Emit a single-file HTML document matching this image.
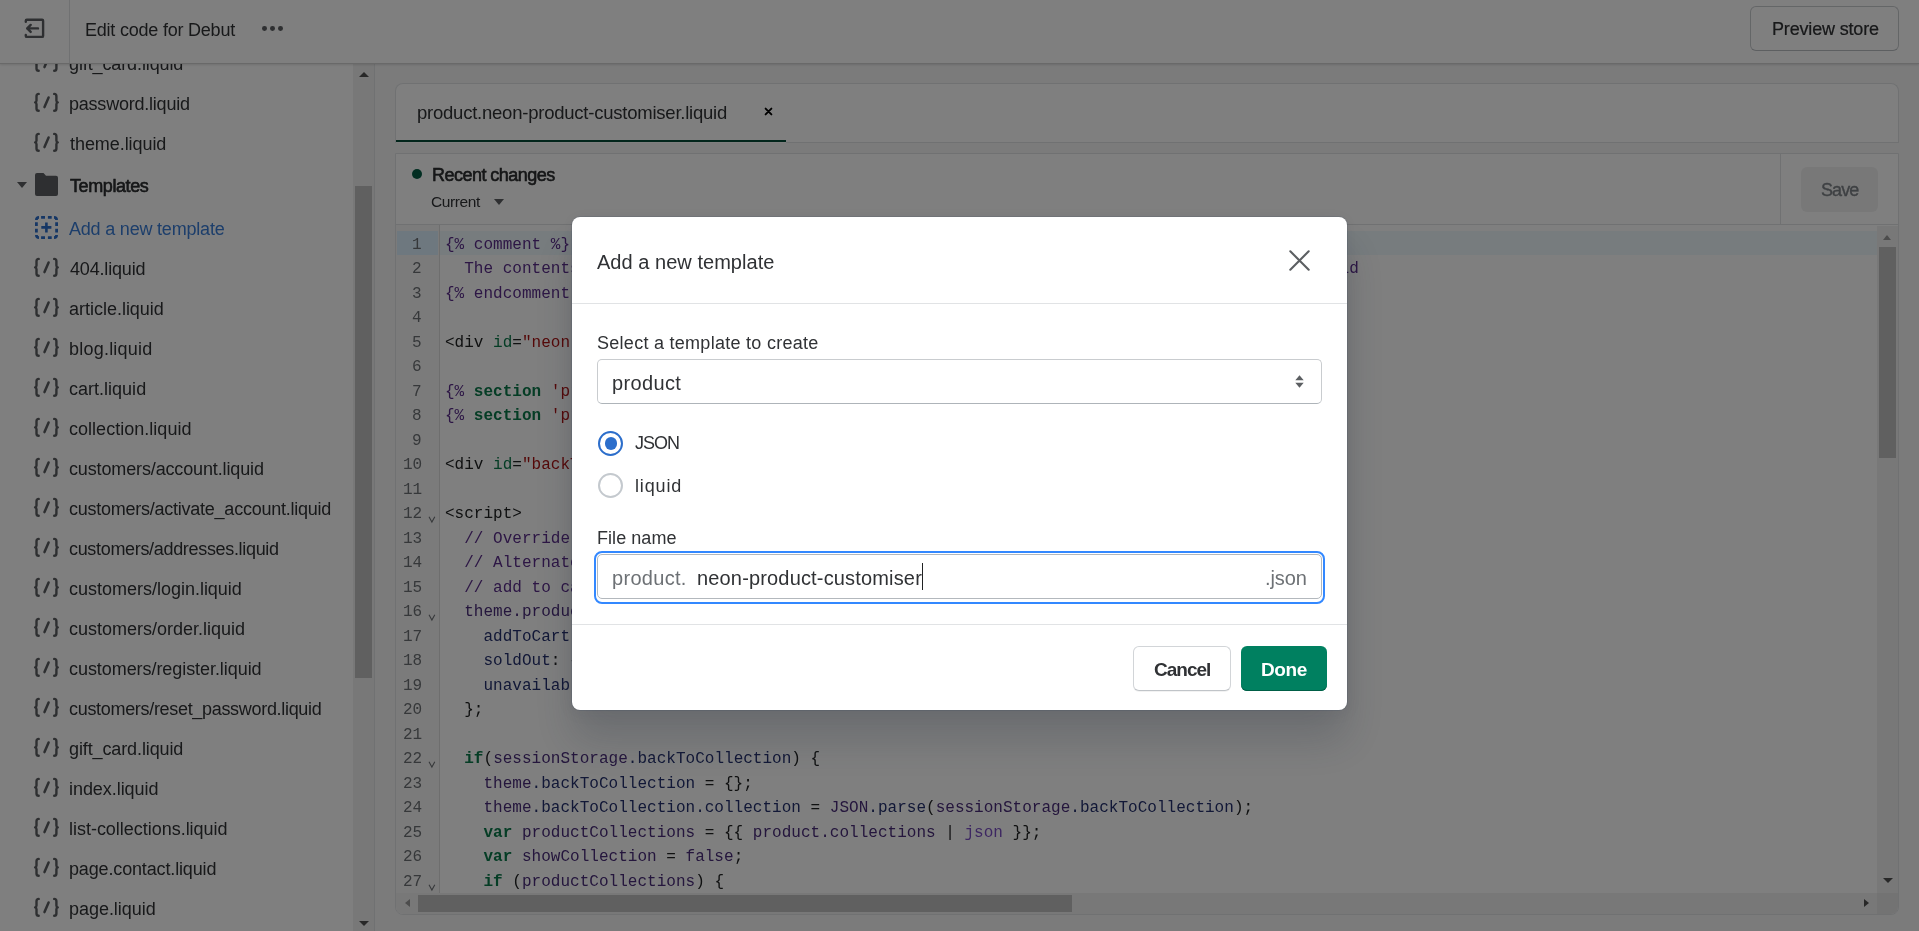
<!DOCTYPE html>
<html><head><meta charset="utf-8"><style>
html,body{margin:0;padding:0;}
body{width:1919px;height:931px;overflow:hidden;position:relative;background:#fff;font-family:'Liberation Sans', sans-serif;}
.box{position:absolute;box-sizing:border-box;}
.t{position:absolute;white-space:pre;will-change:transform;}
svg.box{box-sizing:content-box;overflow:visible;}
</style></head><body>
<div class="box" style="left:0;top:0;width:1919px;height:64px;background:#fff;border-bottom:1px solid #d2d2d2;box-shadow:0 1px 2px rgba(0,0,0,0.12);z-index:5"></div><div class="box" style="left:69px;top:0;width:1px;height:63px;background:#e1e3e5;z-index:6"></div><svg class="box" style="left:24px;top:17px;z-index:6" width="22" height="23" viewBox="0 0 22 23">
<path d="M1.8 4.7 V3.8 Q1.8 2.8 2.8 2.8 H18.1 Q19.1 2.8 19.1 3.8 V18.9 Q19.1 19.9 18.1 19.9 H2.8 Q1.8 19.9 1.8 18.9 V17.9" fill="none" stroke="#5c5f62" stroke-width="2.4" stroke-linecap="round" stroke-linejoin="round"/>
<path d="M14 11.4 H3.2 M6.7 7.9 L3.2 11.4 L6.7 14.9" fill="none" stroke="#5c5f62" stroke-width="2.4" stroke-linecap="round" stroke-linejoin="round"/>
</svg><div style="position:absolute;left:0;top:0;z-index:7"><div class="t" style="left:84.60px;top:19px;font-family:'Liberation Sans', sans-serif;font-size:18px;line-height:23px;color:#303235;font-weight:400;letter-spacing:-0.217px;">Edit code for Debut</div></div><div class="box" style="left:262.40000000000003px;top:26px;width:4.8px;height:4.8px;border-radius:50%;background:#5c5f62;z-index:6"></div><div class="box" style="left:270.1px;top:26px;width:4.8px;height:4.8px;border-radius:50%;background:#5c5f62;z-index:6"></div><div class="box" style="left:277.8px;top:26px;width:4.8px;height:4.8px;border-radius:50%;background:#5c5f62;z-index:6"></div><div class="box" style="left:1750px;top:6px;width:149px;height:45px;border:1px solid #c9cccf;border-bottom-color:#babfc3;border-radius:6px;background:#fff;z-index:6"></div><div style="position:absolute;left:0;top:0;z-index:7"><div class="t" style="left:1771.50px;top:18px;font-family:'Liberation Sans', sans-serif;font-size:18px;line-height:23px;color:#303235;font-weight:400;letter-spacing:-0.167px;-webkit-text-stroke:0.2px #202223;">Preview store</div></div><div class="box" style="left:0;top:63px;width:375px;height:868px;background:#fff;border-right:1px solid #e1e3e5"></div><div class="box" style="left:353px;top:63px;width:21px;height:868px;background:#f1f1f1"></div><div class="box" style="left:355px;top:186px;width:17px;height:492px;background:#c1c1c1"></div><div class="box" style="left:359px;top:72px;width:0;height:0;border-left:5px solid transparent;border-right:5px solid transparent;border-bottom:5px solid #505050"></div><div class="box" style="left:358.5px;top:921px;width:0;height:0;border-left:5px solid transparent;border-right:5px solid transparent;border-top:5px solid #505050"></div><svg class="box" style="left:33px;top:51px" width="27" height="23" viewBox="0 0 27 23"><path d="M5.7 2.9 Q3.5 2.9 3.5 5.2 V9.6 Q3.5 11.2 2.1 11.4 Q3.5 11.6 3.5 13.2 V17.5 Q3.5 19.8 5.7 19.8" fill="none" stroke="#5c5f62" stroke-width="2.4" stroke-linecap="round" stroke-linejoin="round"/><path d="M21.2 2.9 Q23.4 2.9 23.4 5.2 V9.6 Q23.4 11.2 24.8 11.4 Q23.4 11.6 23.4 13.2 V17.5 Q23.4 19.8 21.2 19.8" fill="none" stroke="#5c5f62" stroke-width="2.4" stroke-linecap="round" stroke-linejoin="round"/><path d="M11.5 16.1 L15.6 6.5" stroke="#5c5f62" stroke-width="2.5" stroke-linecap="round"/></svg><div class="t" style="left:68.50px;top:53px;font-family:'Liberation Sans', sans-serif;font-size:18px;line-height:23px;color:#303235;font-weight:400;letter-spacing:-0.113px;">gift_card.liquid</div><svg class="box" style="left:33px;top:91px" width="27" height="23" viewBox="0 0 27 23"><path d="M5.7 2.9 Q3.5 2.9 3.5 5.2 V9.6 Q3.5 11.2 2.1 11.4 Q3.5 11.6 3.5 13.2 V17.5 Q3.5 19.8 5.7 19.8" fill="none" stroke="#5c5f62" stroke-width="2.4" stroke-linecap="round" stroke-linejoin="round"/><path d="M21.2 2.9 Q23.4 2.9 23.4 5.2 V9.6 Q23.4 11.2 24.8 11.4 Q23.4 11.6 23.4 13.2 V17.5 Q23.4 19.8 21.2 19.8" fill="none" stroke="#5c5f62" stroke-width="2.4" stroke-linecap="round" stroke-linejoin="round"/><path d="M11.5 16.1 L15.6 6.5" stroke="#5c5f62" stroke-width="2.5" stroke-linecap="round"/></svg><div class="t" style="left:68.50px;top:93px;font-family:'Liberation Sans', sans-serif;font-size:18px;line-height:23px;color:#303235;font-weight:400;letter-spacing:-0.221px;">password.liquid</div><svg class="box" style="left:33px;top:131px" width="27" height="23" viewBox="0 0 27 23"><path d="M5.7 2.9 Q3.5 2.9 3.5 5.2 V9.6 Q3.5 11.2 2.1 11.4 Q3.5 11.6 3.5 13.2 V17.5 Q3.5 19.8 5.7 19.8" fill="none" stroke="#5c5f62" stroke-width="2.4" stroke-linecap="round" stroke-linejoin="round"/><path d="M21.2 2.9 Q23.4 2.9 23.4 5.2 V9.6 Q23.4 11.2 24.8 11.4 Q23.4 11.6 23.4 13.2 V17.5 Q23.4 19.8 21.2 19.8" fill="none" stroke="#5c5f62" stroke-width="2.4" stroke-linecap="round" stroke-linejoin="round"/><path d="M11.5 16.1 L15.6 6.5" stroke="#5c5f62" stroke-width="2.5" stroke-linecap="round"/></svg><div class="t" style="left:69.50px;top:133px;font-family:'Liberation Sans', sans-serif;font-size:18px;line-height:23px;color:#303235;font-weight:400;letter-spacing:-0.064px;">theme.liquid</div><div class="box" style="left:16.5px;top:182px;width:0;height:0;border-left:5px solid transparent;border-right:5px solid transparent;border-top:6.5px solid #5c5f62"></div><svg class="box" style="left:35px;top:173px" width="23" height="23" viewBox="0 0 23 23"><path d="M0 2 Q0 0 2 0 H8.5 L11 2.8 H21 Q23 2.8 23 4.8 V21 Q23 23 21 23 H2 Q0 23 0 21 Z" fill="#5c5f62"/></svg><div class="t" style="left:69.75px;top:175px;font-family:'Liberation Sans', sans-serif;font-size:18px;line-height:23px;color:#303235;font-weight:400;letter-spacing:-0.406px;-webkit-text-stroke:0.55px #202223;">Templates</div><svg class="box" style="left:35px;top:216px" width="23" height="23" viewBox="0 0 23 23">
<path d="M1.4 4 Q1.4 1.4 4 1.4 M6.1 1.4 H10 M12.9 1.4 H16.7 M19 1.4 Q21.6 1.4 21.6 4 M21.6 6.2 V10 M21.6 12.8 V16.6 M21.6 19 Q21.6 21.6 19 21.6 M16.7 21.6 H12.9 M10 21.6 H6.1 M4 21.6 Q1.4 21.6 1.4 19 M1.4 16.6 V12.8 M1.4 10 V6.2" fill="none" stroke="#2c6ecb" stroke-width="2.8"/>
<path d="M6.3 11.4 H16.4 M11.4 6.4 V16.4" stroke="#2c6ecb" stroke-width="2.6"/></svg><div class="t" style="left:69.40px;top:218px;font-family:'Liberation Sans', sans-serif;font-size:18px;line-height:23px;color:#3a7dd6;font-weight:400;letter-spacing:-0.200px;">Add a new template</div><svg class="box" style="left:33px;top:256px" width="27" height="23" viewBox="0 0 27 23"><path d="M5.7 2.9 Q3.5 2.9 3.5 5.2 V9.6 Q3.5 11.2 2.1 11.4 Q3.5 11.6 3.5 13.2 V17.5 Q3.5 19.8 5.7 19.8" fill="none" stroke="#5c5f62" stroke-width="2.4" stroke-linecap="round" stroke-linejoin="round"/><path d="M21.2 2.9 Q23.4 2.9 23.4 5.2 V9.6 Q23.4 11.2 24.8 11.4 Q23.4 11.6 23.4 13.2 V17.5 Q23.4 19.8 21.2 19.8" fill="none" stroke="#5c5f62" stroke-width="2.4" stroke-linecap="round" stroke-linejoin="round"/><path d="M11.5 16.1 L15.6 6.5" stroke="#5c5f62" stroke-width="2.5" stroke-linecap="round"/></svg><div class="t" style="left:69.50px;top:258px;font-family:'Liberation Sans', sans-serif;font-size:18px;line-height:23px;color:#303235;font-weight:400;letter-spacing:-0.167px;">404.liquid</div><svg class="box" style="left:33px;top:296px" width="27" height="23" viewBox="0 0 27 23"><path d="M5.7 2.9 Q3.5 2.9 3.5 5.2 V9.6 Q3.5 11.2 2.1 11.4 Q3.5 11.6 3.5 13.2 V17.5 Q3.5 19.8 5.7 19.8" fill="none" stroke="#5c5f62" stroke-width="2.4" stroke-linecap="round" stroke-linejoin="round"/><path d="M21.2 2.9 Q23.4 2.9 23.4 5.2 V9.6 Q23.4 11.2 24.8 11.4 Q23.4 11.6 23.4 13.2 V17.5 Q23.4 19.8 21.2 19.8" fill="none" stroke="#5c5f62" stroke-width="2.4" stroke-linecap="round" stroke-linejoin="round"/><path d="M11.5 16.1 L15.6 6.5" stroke="#5c5f62" stroke-width="2.5" stroke-linecap="round"/></svg><div class="t" style="left:68.50px;top:298px;font-family:'Liberation Sans', sans-serif;font-size:18px;line-height:23px;color:#303235;font-weight:400;letter-spacing:-0.015px;">article.liquid</div><svg class="box" style="left:33px;top:336px" width="27" height="23" viewBox="0 0 27 23"><path d="M5.7 2.9 Q3.5 2.9 3.5 5.2 V9.6 Q3.5 11.2 2.1 11.4 Q3.5 11.6 3.5 13.2 V17.5 Q3.5 19.8 5.7 19.8" fill="none" stroke="#5c5f62" stroke-width="2.4" stroke-linecap="round" stroke-linejoin="round"/><path d="M21.2 2.9 Q23.4 2.9 23.4 5.2 V9.6 Q23.4 11.2 24.8 11.4 Q23.4 11.6 23.4 13.2 V17.5 Q23.4 19.8 21.2 19.8" fill="none" stroke="#5c5f62" stroke-width="2.4" stroke-linecap="round" stroke-linejoin="round"/><path d="M11.5 16.1 L15.6 6.5" stroke="#5c5f62" stroke-width="2.5" stroke-linecap="round"/></svg><div class="t" style="left:68.50px;top:338px;font-family:'Liberation Sans', sans-serif;font-size:18px;line-height:23px;color:#303235;font-weight:400;letter-spacing:0.220px;">blog.liquid</div><svg class="box" style="left:33px;top:376px" width="27" height="23" viewBox="0 0 27 23"><path d="M5.7 2.9 Q3.5 2.9 3.5 5.2 V9.6 Q3.5 11.2 2.1 11.4 Q3.5 11.6 3.5 13.2 V17.5 Q3.5 19.8 5.7 19.8" fill="none" stroke="#5c5f62" stroke-width="2.4" stroke-linecap="round" stroke-linejoin="round"/><path d="M21.2 2.9 Q23.4 2.9 23.4 5.2 V9.6 Q23.4 11.2 24.8 11.4 Q23.4 11.6 23.4 13.2 V17.5 Q23.4 19.8 21.2 19.8" fill="none" stroke="#5c5f62" stroke-width="2.4" stroke-linecap="round" stroke-linejoin="round"/><path d="M11.5 16.1 L15.6 6.5" stroke="#5c5f62" stroke-width="2.5" stroke-linecap="round"/></svg><div class="t" style="left:68.50px;top:378px;font-family:'Liberation Sans', sans-serif;font-size:18px;line-height:23px;color:#303235;font-weight:400;letter-spacing:0.010px;">cart.liquid</div><svg class="box" style="left:33px;top:416px" width="27" height="23" viewBox="0 0 27 23"><path d="M5.7 2.9 Q3.5 2.9 3.5 5.2 V9.6 Q3.5 11.2 2.1 11.4 Q3.5 11.6 3.5 13.2 V17.5 Q3.5 19.8 5.7 19.8" fill="none" stroke="#5c5f62" stroke-width="2.4" stroke-linecap="round" stroke-linejoin="round"/><path d="M21.2 2.9 Q23.4 2.9 23.4 5.2 V9.6 Q23.4 11.2 24.8 11.4 Q23.4 11.6 23.4 13.2 V17.5 Q23.4 19.8 21.2 19.8" fill="none" stroke="#5c5f62" stroke-width="2.4" stroke-linecap="round" stroke-linejoin="round"/><path d="M11.5 16.1 L15.6 6.5" stroke="#5c5f62" stroke-width="2.5" stroke-linecap="round"/></svg><div class="t" style="left:68.50px;top:418px;font-family:'Liberation Sans', sans-serif;font-size:18px;line-height:23px;color:#303235;font-weight:400;letter-spacing:0.025px;">collection.liquid</div><svg class="box" style="left:33px;top:456px" width="27" height="23" viewBox="0 0 27 23"><path d="M5.7 2.9 Q3.5 2.9 3.5 5.2 V9.6 Q3.5 11.2 2.1 11.4 Q3.5 11.6 3.5 13.2 V17.5 Q3.5 19.8 5.7 19.8" fill="none" stroke="#5c5f62" stroke-width="2.4" stroke-linecap="round" stroke-linejoin="round"/><path d="M21.2 2.9 Q23.4 2.9 23.4 5.2 V9.6 Q23.4 11.2 24.8 11.4 Q23.4 11.6 23.4 13.2 V17.5 Q23.4 19.8 21.2 19.8" fill="none" stroke="#5c5f62" stroke-width="2.4" stroke-linecap="round" stroke-linejoin="round"/><path d="M11.5 16.1 L15.6 6.5" stroke="#5c5f62" stroke-width="2.5" stroke-linecap="round"/></svg><div class="t" style="left:68.50px;top:458px;font-family:'Liberation Sans', sans-serif;font-size:18px;line-height:23px;color:#303235;font-weight:400;letter-spacing:-0.139px;">customers/account.liquid</div><svg class="box" style="left:33px;top:496px" width="27" height="23" viewBox="0 0 27 23"><path d="M5.7 2.9 Q3.5 2.9 3.5 5.2 V9.6 Q3.5 11.2 2.1 11.4 Q3.5 11.6 3.5 13.2 V17.5 Q3.5 19.8 5.7 19.8" fill="none" stroke="#5c5f62" stroke-width="2.4" stroke-linecap="round" stroke-linejoin="round"/><path d="M21.2 2.9 Q23.4 2.9 23.4 5.2 V9.6 Q23.4 11.2 24.8 11.4 Q23.4 11.6 23.4 13.2 V17.5 Q23.4 19.8 21.2 19.8" fill="none" stroke="#5c5f62" stroke-width="2.4" stroke-linecap="round" stroke-linejoin="round"/><path d="M11.5 16.1 L15.6 6.5" stroke="#5c5f62" stroke-width="2.5" stroke-linecap="round"/></svg><div class="t" style="left:68.50px;top:498px;font-family:'Liberation Sans', sans-serif;font-size:18px;line-height:23px;color:#303235;font-weight:400;letter-spacing:-0.247px;">customers/activate_account.liquid</div><svg class="box" style="left:33px;top:536px" width="27" height="23" viewBox="0 0 27 23"><path d="M5.7 2.9 Q3.5 2.9 3.5 5.2 V9.6 Q3.5 11.2 2.1 11.4 Q3.5 11.6 3.5 13.2 V17.5 Q3.5 19.8 5.7 19.8" fill="none" stroke="#5c5f62" stroke-width="2.4" stroke-linecap="round" stroke-linejoin="round"/><path d="M21.2 2.9 Q23.4 2.9 23.4 5.2 V9.6 Q23.4 11.2 24.8 11.4 Q23.4 11.6 23.4 13.2 V17.5 Q23.4 19.8 21.2 19.8" fill="none" stroke="#5c5f62" stroke-width="2.4" stroke-linecap="round" stroke-linejoin="round"/><path d="M11.5 16.1 L15.6 6.5" stroke="#5c5f62" stroke-width="2.5" stroke-linecap="round"/></svg><div class="t" style="left:68.50px;top:538px;font-family:'Liberation Sans', sans-serif;font-size:18px;line-height:23px;color:#303235;font-weight:400;letter-spacing:-0.324px;">customers/addresses.liquid</div><svg class="box" style="left:33px;top:576px" width="27" height="23" viewBox="0 0 27 23"><path d="M5.7 2.9 Q3.5 2.9 3.5 5.2 V9.6 Q3.5 11.2 2.1 11.4 Q3.5 11.6 3.5 13.2 V17.5 Q3.5 19.8 5.7 19.8" fill="none" stroke="#5c5f62" stroke-width="2.4" stroke-linecap="round" stroke-linejoin="round"/><path d="M21.2 2.9 Q23.4 2.9 23.4 5.2 V9.6 Q23.4 11.2 24.8 11.4 Q23.4 11.6 23.4 13.2 V17.5 Q23.4 19.8 21.2 19.8" fill="none" stroke="#5c5f62" stroke-width="2.4" stroke-linecap="round" stroke-linejoin="round"/><path d="M11.5 16.1 L15.6 6.5" stroke="#5c5f62" stroke-width="2.5" stroke-linecap="round"/></svg><div class="t" style="left:68.50px;top:578px;font-family:'Liberation Sans', sans-serif;font-size:18px;line-height:23px;color:#303235;font-weight:400;letter-spacing:-0.010px;">customers/login.liquid</div><svg class="box" style="left:33px;top:616px" width="27" height="23" viewBox="0 0 27 23"><path d="M5.7 2.9 Q3.5 2.9 3.5 5.2 V9.6 Q3.5 11.2 2.1 11.4 Q3.5 11.6 3.5 13.2 V17.5 Q3.5 19.8 5.7 19.8" fill="none" stroke="#5c5f62" stroke-width="2.4" stroke-linecap="round" stroke-linejoin="round"/><path d="M21.2 2.9 Q23.4 2.9 23.4 5.2 V9.6 Q23.4 11.2 24.8 11.4 Q23.4 11.6 23.4 13.2 V17.5 Q23.4 19.8 21.2 19.8" fill="none" stroke="#5c5f62" stroke-width="2.4" stroke-linecap="round" stroke-linejoin="round"/><path d="M11.5 16.1 L15.6 6.5" stroke="#5c5f62" stroke-width="2.5" stroke-linecap="round"/></svg><div class="t" style="left:68.50px;top:618px;font-family:'Liberation Sans', sans-serif;font-size:18px;line-height:23px;color:#303235;font-weight:400;">customers/order.liquid</div><svg class="box" style="left:33px;top:656px" width="27" height="23" viewBox="0 0 27 23"><path d="M5.7 2.9 Q3.5 2.9 3.5 5.2 V9.6 Q3.5 11.2 2.1 11.4 Q3.5 11.6 3.5 13.2 V17.5 Q3.5 19.8 5.7 19.8" fill="none" stroke="#5c5f62" stroke-width="2.4" stroke-linecap="round" stroke-linejoin="round"/><path d="M21.2 2.9 Q23.4 2.9 23.4 5.2 V9.6 Q23.4 11.2 24.8 11.4 Q23.4 11.6 23.4 13.2 V17.5 Q23.4 19.8 21.2 19.8" fill="none" stroke="#5c5f62" stroke-width="2.4" stroke-linecap="round" stroke-linejoin="round"/><path d="M11.5 16.1 L15.6 6.5" stroke="#5c5f62" stroke-width="2.5" stroke-linecap="round"/></svg><div class="t" style="left:68.50px;top:658px;font-family:'Liberation Sans', sans-serif;font-size:18px;line-height:23px;color:#303235;font-weight:400;letter-spacing:-0.062px;">customers/register.liquid</div><svg class="box" style="left:33px;top:696px" width="27" height="23" viewBox="0 0 27 23"><path d="M5.7 2.9 Q3.5 2.9 3.5 5.2 V9.6 Q3.5 11.2 2.1 11.4 Q3.5 11.6 3.5 13.2 V17.5 Q3.5 19.8 5.7 19.8" fill="none" stroke="#5c5f62" stroke-width="2.4" stroke-linecap="round" stroke-linejoin="round"/><path d="M21.2 2.9 Q23.4 2.9 23.4 5.2 V9.6 Q23.4 11.2 24.8 11.4 Q23.4 11.6 23.4 13.2 V17.5 Q23.4 19.8 21.2 19.8" fill="none" stroke="#5c5f62" stroke-width="2.4" stroke-linecap="round" stroke-linejoin="round"/><path d="M11.5 16.1 L15.6 6.5" stroke="#5c5f62" stroke-width="2.5" stroke-linecap="round"/></svg><div class="t" style="left:68.50px;top:698px;font-family:'Liberation Sans', sans-serif;font-size:18px;line-height:23px;color:#303235;font-weight:400;letter-spacing:-0.313px;">customers/reset_password.liquid</div><svg class="box" style="left:33px;top:736px" width="27" height="23" viewBox="0 0 27 23"><path d="M5.7 2.9 Q3.5 2.9 3.5 5.2 V9.6 Q3.5 11.2 2.1 11.4 Q3.5 11.6 3.5 13.2 V17.5 Q3.5 19.8 5.7 19.8" fill="none" stroke="#5c5f62" stroke-width="2.4" stroke-linecap="round" stroke-linejoin="round"/><path d="M21.2 2.9 Q23.4 2.9 23.4 5.2 V9.6 Q23.4 11.2 24.8 11.4 Q23.4 11.6 23.4 13.2 V17.5 Q23.4 19.8 21.2 19.8" fill="none" stroke="#5c5f62" stroke-width="2.4" stroke-linecap="round" stroke-linejoin="round"/><path d="M11.5 16.1 L15.6 6.5" stroke="#5c5f62" stroke-width="2.5" stroke-linecap="round"/></svg><div class="t" style="left:68.50px;top:738px;font-family:'Liberation Sans', sans-serif;font-size:18px;line-height:23px;color:#303235;font-weight:400;letter-spacing:-0.113px;">gift_card.liquid</div><svg class="box" style="left:33px;top:776px" width="27" height="23" viewBox="0 0 27 23"><path d="M5.7 2.9 Q3.5 2.9 3.5 5.2 V9.6 Q3.5 11.2 2.1 11.4 Q3.5 11.6 3.5 13.2 V17.5 Q3.5 19.8 5.7 19.8" fill="none" stroke="#5c5f62" stroke-width="2.4" stroke-linecap="round" stroke-linejoin="round"/><path d="M21.2 2.9 Q23.4 2.9 23.4 5.2 V9.6 Q23.4 11.2 24.8 11.4 Q23.4 11.6 23.4 13.2 V17.5 Q23.4 19.8 21.2 19.8" fill="none" stroke="#5c5f62" stroke-width="2.4" stroke-linecap="round" stroke-linejoin="round"/><path d="M11.5 16.1 L15.6 6.5" stroke="#5c5f62" stroke-width="2.5" stroke-linecap="round"/></svg><div class="t" style="left:68.50px;top:778px;font-family:'Liberation Sans', sans-serif;font-size:18px;line-height:23px;color:#303235;font-weight:400;letter-spacing:-0.055px;">index.liquid</div><svg class="box" style="left:33px;top:816px" width="27" height="23" viewBox="0 0 27 23"><path d="M5.7 2.9 Q3.5 2.9 3.5 5.2 V9.6 Q3.5 11.2 2.1 11.4 Q3.5 11.6 3.5 13.2 V17.5 Q3.5 19.8 5.7 19.8" fill="none" stroke="#5c5f62" stroke-width="2.4" stroke-linecap="round" stroke-linejoin="round"/><path d="M21.2 2.9 Q23.4 2.9 23.4 5.2 V9.6 Q23.4 11.2 24.8 11.4 Q23.4 11.6 23.4 13.2 V17.5 Q23.4 19.8 21.2 19.8" fill="none" stroke="#5c5f62" stroke-width="2.4" stroke-linecap="round" stroke-linejoin="round"/><path d="M11.5 16.1 L15.6 6.5" stroke="#5c5f62" stroke-width="2.5" stroke-linecap="round"/></svg><div class="t" style="left:68.50px;top:818px;font-family:'Liberation Sans', sans-serif;font-size:18px;line-height:23px;color:#303235;font-weight:400;letter-spacing:-0.023px;">list-collections.liquid</div><svg class="box" style="left:33px;top:856px" width="27" height="23" viewBox="0 0 27 23"><path d="M5.7 2.9 Q3.5 2.9 3.5 5.2 V9.6 Q3.5 11.2 2.1 11.4 Q3.5 11.6 3.5 13.2 V17.5 Q3.5 19.8 5.7 19.8" fill="none" stroke="#5c5f62" stroke-width="2.4" stroke-linecap="round" stroke-linejoin="round"/><path d="M21.2 2.9 Q23.4 2.9 23.4 5.2 V9.6 Q23.4 11.2 24.8 11.4 Q23.4 11.6 23.4 13.2 V17.5 Q23.4 19.8 21.2 19.8" fill="none" stroke="#5c5f62" stroke-width="2.4" stroke-linecap="round" stroke-linejoin="round"/><path d="M11.5 16.1 L15.6 6.5" stroke="#5c5f62" stroke-width="2.5" stroke-linecap="round"/></svg><div class="t" style="left:68.50px;top:858px;font-family:'Liberation Sans', sans-serif;font-size:18px;line-height:23px;color:#303235;font-weight:400;letter-spacing:-0.150px;">page.contact.liquid</div><svg class="box" style="left:33px;top:896px" width="27" height="23" viewBox="0 0 27 23"><path d="M5.7 2.9 Q3.5 2.9 3.5 5.2 V9.6 Q3.5 11.2 2.1 11.4 Q3.5 11.6 3.5 13.2 V17.5 Q3.5 19.8 5.7 19.8" fill="none" stroke="#5c5f62" stroke-width="2.4" stroke-linecap="round" stroke-linejoin="round"/><path d="M21.2 2.9 Q23.4 2.9 23.4 5.2 V9.6 Q23.4 11.2 24.8 11.4 Q23.4 11.6 23.4 13.2 V17.5 Q23.4 19.8 21.2 19.8" fill="none" stroke="#5c5f62" stroke-width="2.4" stroke-linecap="round" stroke-linejoin="round"/><path d="M11.5 16.1 L15.6 6.5" stroke="#5c5f62" stroke-width="2.5" stroke-linecap="round"/></svg><div class="t" style="left:68.50px;top:898px;font-family:'Liberation Sans', sans-serif;font-size:18px;line-height:23px;color:#303235;font-weight:400;letter-spacing:-0.040px;">page.liquid</div><div class="box" style="left:375px;top:64px;width:1544px;height:867px;background:#f6f6f7"></div><div class="box" style="left:395px;top:83px;width:1504px;height:60px;background:#fff;border:1px solid #e1e3e5;border-bottom:none;border-radius:8px 8px 0 0"></div><div class="t" style="left:416.50px;top:101px;font-family:'Liberation Sans', sans-serif;font-size:18.5px;line-height:24px;color:#303235;font-weight:400;letter-spacing:-0.230px;">product.neon-product-customiser.liquid</div><svg class="box" style="left:764px;top:107px" width="9" height="9" viewBox="0 0 9 9"><path d="M1.6 1.6 L7.4 7.4 M7.4 1.6 L1.6 7.4" stroke="#000" stroke-width="1.9" stroke-linecap="round"/></svg><div class="box" style="left:786px;top:142px;width:1112px;height:1px;background:#e1e3e5"></div><div class="box" style="left:396px;top:140px;width:390px;height:2px;background:#054a36"></div><div class="box" style="left:395px;top:153px;width:1504px;height:762px;background:#fff;border:1px solid #e1e3e5;border-radius:0 0 8px 8px"></div><div class="box" style="left:396px;top:224px;width:1502px;height:1px;background:#e1e3e5"></div><div class="box" style="left:1780px;top:154px;width:1px;height:70px;background:#e1e3e5"></div><div class="box" style="left:412px;top:169px;width:10px;height:10px;border-radius:50%;background:#045d45"></div><div class="t" style="left:431.90px;top:164px;font-family:'Liberation Sans', sans-serif;font-size:18px;line-height:23px;color:#303235;font-weight:400;letter-spacing:-0.531px;-webkit-text-stroke:0.55px #202223;">Recent changes</div><div class="t" style="left:431.10px;top:192px;font-family:'Liberation Sans', sans-serif;font-size:15.5px;line-height:20px;color:#303235;font-weight:400;letter-spacing:-0.383px;">Current</div><div class="box" style="left:493.5px;top:199px;width:0;height:0;border-left:5px solid transparent;border-right:5px solid transparent;border-top:6.5px solid #5c5f62"></div><div class="box" style="left:1801px;top:167px;width:77px;height:45px;background:#f1f1f1;border-radius:6px"></div><div class="t" style="left:1820.50px;top:179px;font-family:'Liberation Sans', sans-serif;font-size:18px;line-height:23px;color:#7c8186;font-weight:400;letter-spacing:-0.900px;-webkit-text-stroke:0.35px #7c8186;">Save</div><div class="box" style="left:396px;top:225px;width:44px;height:668px;background:#f7f7f7;border-right:1px solid #dddddd"></div><div class="box" style="left:397px;top:231px;width:41px;height:24px;background:#dcf0ff"></div><div class="box" style="left:440px;top:231px;width:1437px;height:23.5px;background:#eff8fd"></div><div class="box" style="left:1877px;top:226px;width:21px;height:667px;background:#f1f1f1"></div><div class="box" style="left:1879px;top:247px;width:17px;height:211px;background:#c1c1c1"></div><div class="box" style="left:1883px;top:235px;width:0;height:0;border-left:4.6px solid transparent;border-right:4.6px solid transparent;border-bottom:5px solid #9a9a9a"></div><div class="box" style="left:1883px;top:878px;width:0;height:0;border-left:5px solid transparent;border-right:5px solid transparent;border-top:5px solid #505050"></div><div class="box" style="left:396px;top:893px;width:1481px;height:21px;background:#f1f1f1;border-radius:0 0 0 7px"></div><div class="box" style="left:1877px;top:893px;width:21px;height:21px;background:#e6e6e6;border-radius:0 0 7px 0"></div><div class="box" style="left:418px;top:895px;width:654px;height:17px;background:#c1c1c1"></div><div class="box" style="left:405px;top:898.5px;width:0;height:0;border-top:4.7px solid transparent;border-bottom:4.7px solid transparent;border-right:5.3px solid #9a9a9a"></div><div class="box" style="left:1864px;top:899px;width:0;height:0;border-top:4.5px solid transparent;border-bottom:4.5px solid transparent;border-left:5px solid #505050"></div><div class="t" style="left:412.40px;top:235px;font-family:'Liberation Mono', monospace;font-size:16px;line-height:21px;color:#6d7175;font-weight:400;">1</div><div class="t" style="left:445.00px;top:235px;font-family:'Liberation Mono', monospace;font-size:16px;line-height:21px;color:#202223;font-weight:400;letter-spacing:0.018px;"><span style="color:#5a2d8a;">{% comment %}</span></div><div class="t" style="left:412.40px;top:259px;font-family:'Liberation Mono', monospace;font-size:16px;line-height:21px;color:#6d7175;font-weight:400;">2</div><div class="t" style="left:445.00px;top:259px;font-family:'Liberation Mono', monospace;font-size:16px;line-height:21px;color:#202223;font-weight:400;letter-spacing:0.018px;"><span style="color:#5a2d8a;">  The contents of the product.liquid template can be found in /sections/product-template.liquid</span></div><div class="t" style="left:412.40px;top:284px;font-family:'Liberation Mono', monospace;font-size:16px;line-height:21px;color:#6d7175;font-weight:400;">3</div><div class="t" style="left:445.00px;top:284px;font-family:'Liberation Mono', monospace;font-size:16px;line-height:21px;color:#202223;font-weight:400;letter-spacing:0.018px;"><span style="color:#5a2d8a;">{% endcomment %}</span></div><div class="t" style="left:412.40px;top:308px;font-family:'Liberation Mono', monospace;font-size:16px;line-height:21px;color:#6d7175;font-weight:400;">4</div><div class="t" style="left:412.40px;top:333px;font-family:'Liberation Mono', monospace;font-size:16px;line-height:21px;color:#6d7175;font-weight:400;">5</div><div class="t" style="left:445.00px;top:333px;font-family:'Liberation Mono', monospace;font-size:16px;line-height:21px;color:#202223;font-weight:400;letter-spacing:0.018px;"><span style="color:#202223;">&lt;div </span><span style="color:#0b7a4b;">id</span><span style="color:#202223;">=</span><span style="color:#a11;">&quot;neon-product-customiser&quot;</span><span style="color:#202223;">&gt;&lt;/div&gt;</span></div><div class="t" style="left:412.40px;top:357px;font-family:'Liberation Mono', monospace;font-size:16px;line-height:21px;color:#6d7175;font-weight:400;">6</div><div class="t" style="left:412.40px;top:382px;font-family:'Liberation Mono', monospace;font-size:16px;line-height:21px;color:#6d7175;font-weight:400;">7</div><div class="t" style="left:445.00px;top:382px;font-family:'Liberation Mono', monospace;font-size:16px;line-height:21px;color:#202223;font-weight:400;letter-spacing:0.018px;"><span style="color:#5a2d8a;">{% </span><span style="color:#0b7a4b;font-weight:700;">section</span><span style="color:#a11;"> &#x27;product-template&#x27;</span><span style="color:#5a2d8a;"> %}</span></div><div class="t" style="left:412.40px;top:406px;font-family:'Liberation Mono', monospace;font-size:16px;line-height:21px;color:#6d7175;font-weight:400;">8</div><div class="t" style="left:445.00px;top:406px;font-family:'Liberation Mono', monospace;font-size:16px;line-height:21px;color:#202223;font-weight:400;letter-spacing:0.018px;"><span style="color:#5a2d8a;">{% </span><span style="color:#0b7a4b;font-weight:700;">section</span><span style="color:#a11;"> &#x27;product-recommendations&#x27;</span><span style="color:#5a2d8a;"> %}</span></div><div class="t" style="left:412.40px;top:431px;font-family:'Liberation Mono', monospace;font-size:16px;line-height:21px;color:#6d7175;font-weight:400;">9</div><div class="t" style="left:402.80px;top:455px;font-family:'Liberation Mono', monospace;font-size:16px;line-height:21px;color:#6d7175;font-weight:400;">10</div><div class="t" style="left:445.00px;top:455px;font-family:'Liberation Mono', monospace;font-size:16px;line-height:21px;color:#202223;font-weight:400;letter-spacing:0.018px;"><span style="color:#202223;">&lt;div </span><span style="color:#0b7a4b;">id</span><span style="color:#202223;">=</span><span style="color:#a11;">&quot;backToCollection&quot;</span><span style="color:#202223;">&gt;&lt;/div&gt;</span></div><div class="t" style="left:402.80px;top:480px;font-family:'Liberation Mono', monospace;font-size:16px;line-height:21px;color:#6d7175;font-weight:400;">11</div><div class="t" style="left:402.80px;top:504px;font-family:'Liberation Mono', monospace;font-size:16px;line-height:21px;color:#6d7175;font-weight:400;">12</div><div class="t" style="left:445.00px;top:504px;font-family:'Liberation Mono', monospace;font-size:16px;line-height:21px;color:#202223;font-weight:400;letter-spacing:0.018px;"><span style="color:#202223;">&lt;script&gt;</span></div><svg class="box" style="left:428px;top:516px" width="8" height="7" viewBox="0 0 8 7"><path d="M1 0.8 L3.9 6 L6.8 0.8" fill="none" stroke="#6d7175" stroke-width="1.1"/></svg><div class="t" style="left:402.80px;top:529px;font-family:'Liberation Mono', monospace;font-size:16px;line-height:21px;color:#6d7175;font-weight:400;">13</div><div class="t" style="left:445.00px;top:529px;font-family:'Liberation Mono', monospace;font-size:16px;line-height:21px;color:#202223;font-weight:400;letter-spacing:0.018px;"><span style="color:#5a2d8a;">  // Override default values of shop.strings for each template.</span></div><div class="t" style="left:402.80px;top:553px;font-family:'Liberation Mono', monospace;font-size:16px;line-height:21px;color:#6d7175;font-weight:400;">14</div><div class="t" style="left:445.00px;top:553px;font-family:'Liberation Mono', monospace;font-size:16px;line-height:21px;color:#202223;font-weight:400;letter-spacing:0.018px;"><span style="color:#5a2d8a;">  // Alternate product templates can change values of</span></div><div class="t" style="left:402.80px;top:578px;font-family:'Liberation Mono', monospace;font-size:16px;line-height:21px;color:#6d7175;font-weight:400;">15</div><div class="t" style="left:445.00px;top:578px;font-family:'Liberation Mono', monospace;font-size:16px;line-height:21px;color:#202223;font-weight:400;letter-spacing:0.018px;"><span style="color:#5a2d8a;">  // add to cart button, sold out, and unavailable states here.</span></div><div class="t" style="left:402.80px;top:602px;font-family:'Liberation Mono', monospace;font-size:16px;line-height:21px;color:#6d7175;font-weight:400;">16</div><div class="t" style="left:445.00px;top:602px;font-family:'Liberation Mono', monospace;font-size:16px;line-height:21px;color:#202223;font-weight:400;letter-spacing:0.018px;"><span style="color:#202223;">  </span><span style="color:#4a2d7a;">theme</span><span style="color:#4a2d7a;">.productStrings</span><span style="color:#202223;"> = {</span></div><svg class="box" style="left:428px;top:614px" width="8" height="7" viewBox="0 0 8 7"><path d="M1 0.8 L3.9 6 L6.8 0.8" fill="none" stroke="#6d7175" stroke-width="1.1"/></svg><div class="t" style="left:402.80px;top:627px;font-family:'Liberation Mono', monospace;font-size:16px;line-height:21px;color:#6d7175;font-weight:400;">17</div><div class="t" style="left:445.00px;top:627px;font-family:'Liberation Mono', monospace;font-size:16px;line-height:21px;color:#202223;font-weight:400;letter-spacing:0.018px;"><span style="color:#202223;">    </span><span style="color:#24306e;">addToCart</span><span style="color:#202223;">: {{ </span><span style="color:#a11;">&#x27;products.product.add_to_cart&#x27;</span><span style="color:#202223;"> | t | json }},</span></div><div class="t" style="left:402.80px;top:651px;font-family:'Liberation Mono', monospace;font-size:16px;line-height:21px;color:#6d7175;font-weight:400;">18</div><div class="t" style="left:445.00px;top:651px;font-family:'Liberation Mono', monospace;font-size:16px;line-height:21px;color:#202223;font-weight:400;letter-spacing:0.018px;"><span style="color:#202223;">    </span><span style="color:#24306e;">soldOut</span><span style="color:#202223;">: {{ </span><span style="color:#a11;">&#x27;products.product.sold_out&#x27;</span><span style="color:#202223;"> | t | json }},</span></div><div class="t" style="left:402.80px;top:676px;font-family:'Liberation Mono', monospace;font-size:16px;line-height:21px;color:#6d7175;font-weight:400;">19</div><div class="t" style="left:445.00px;top:676px;font-family:'Liberation Mono', monospace;font-size:16px;line-height:21px;color:#202223;font-weight:400;letter-spacing:0.018px;"><span style="color:#202223;">    </span><span style="color:#24306e;">unavailable</span><span style="color:#202223;">: {{ </span><span style="color:#a11;">&#x27;products.product.unavailable&#x27;</span><span style="color:#202223;"> | t | json }}</span></div><div class="t" style="left:402.80px;top:700px;font-family:'Liberation Mono', monospace;font-size:16px;line-height:21px;color:#6d7175;font-weight:400;">20</div><div class="t" style="left:445.00px;top:700px;font-family:'Liberation Mono', monospace;font-size:16px;line-height:21px;color:#202223;font-weight:400;letter-spacing:0.018px;"><span style="color:#202223;">  };</span></div><div class="t" style="left:402.80px;top:725px;font-family:'Liberation Mono', monospace;font-size:16px;line-height:21px;color:#6d7175;font-weight:400;">21</div><div class="t" style="left:402.80px;top:749px;font-family:'Liberation Mono', monospace;font-size:16px;line-height:21px;color:#6d7175;font-weight:400;">22</div><div class="t" style="left:445.00px;top:749px;font-family:'Liberation Mono', monospace;font-size:16px;line-height:21px;color:#202223;font-weight:400;letter-spacing:0.018px;"><span style="color:#202223;">  </span><span style="color:#0b7a4b;font-weight:700;">if</span><span style="color:#202223;">(</span><span style="color:#4a2d7a;">sessionStorage</span><span style="color:#24306e;">.backToCollection</span><span style="color:#202223;">) {</span></div><svg class="box" style="left:428px;top:761px" width="8" height="7" viewBox="0 0 8 7"><path d="M1 0.8 L3.9 6 L6.8 0.8" fill="none" stroke="#6d7175" stroke-width="1.1"/></svg><div class="t" style="left:402.80px;top:774px;font-family:'Liberation Mono', monospace;font-size:16px;line-height:21px;color:#6d7175;font-weight:400;">23</div><div class="t" style="left:445.00px;top:774px;font-family:'Liberation Mono', monospace;font-size:16px;line-height:21px;color:#202223;font-weight:400;letter-spacing:0.018px;"><span style="color:#202223;">    </span><span style="color:#4a2d7a;">theme</span><span style="color:#24306e;">.backToCollection</span><span style="color:#202223;"> = {};</span></div><div class="t" style="left:402.80px;top:798px;font-family:'Liberation Mono', monospace;font-size:16px;line-height:21px;color:#6d7175;font-weight:400;">24</div><div class="t" style="left:445.00px;top:798px;font-family:'Liberation Mono', monospace;font-size:16px;line-height:21px;color:#202223;font-weight:400;letter-spacing:0.018px;"><span style="color:#202223;">    </span><span style="color:#4a2d7a;">theme</span><span style="color:#24306e;">.backToCollection.collection</span><span style="color:#202223;"> = </span><span style="color:#4a2d7a;">JSON</span><span style="color:#24306e;">.parse</span><span style="color:#202223;">(</span><span style="color:#4a2d7a;">sessionStorage</span><span style="color:#24306e;">.backToCollection</span><span style="color:#202223;">);</span></div><div class="t" style="left:402.80px;top:823px;font-family:'Liberation Mono', monospace;font-size:16px;line-height:21px;color:#6d7175;font-weight:400;">25</div><div class="t" style="left:445.00px;top:823px;font-family:'Liberation Mono', monospace;font-size:16px;line-height:21px;color:#202223;font-weight:400;letter-spacing:0.018px;"><span style="color:#202223;">    </span><span style="color:#0b7a4b;font-weight:700;">var</span><span style="color:#202223;"> </span><span style="color:#4a2d7a;">productCollections</span><span style="color:#202223;"> = {{ </span><span style="color:#4a2d7a;">product.collections</span><span style="color:#202223;"> | </span><span style="color:#7b4fc4;">json</span><span style="color:#202223;"> }};</span></div><div class="t" style="left:402.80px;top:847px;font-family:'Liberation Mono', monospace;font-size:16px;line-height:21px;color:#6d7175;font-weight:400;">26</div><div class="t" style="left:445.00px;top:847px;font-family:'Liberation Mono', monospace;font-size:16px;line-height:21px;color:#202223;font-weight:400;letter-spacing:0.018px;"><span style="color:#202223;">    </span><span style="color:#0b7a4b;font-weight:700;">var</span><span style="color:#202223;"> </span><span style="color:#4a2d7a;">showCollection</span><span style="color:#202223;"> = </span><span style="color:#4a2d7a;">false</span><span style="color:#202223;">;</span></div><div class="t" style="left:402.80px;top:872px;font-family:'Liberation Mono', monospace;font-size:16px;line-height:21px;color:#6d7175;font-weight:400;">27</div><div class="t" style="left:445.00px;top:872px;font-family:'Liberation Mono', monospace;font-size:16px;line-height:21px;color:#202223;font-weight:400;letter-spacing:0.018px;"><span style="color:#202223;">    </span><span style="color:#0b7a4b;font-weight:700;">if</span><span style="color:#202223;"> (</span><span style="color:#4a2d7a;">productCollections</span><span style="color:#202223;">) {</span></div><svg class="box" style="left:428px;top:884px" width="8" height="7" viewBox="0 0 8 7"><path d="M1 0.8 L3.9 6 L6.8 0.8" fill="none" stroke="#6d7175" stroke-width="1.1"/></svg><div class="box" style="left:0;top:0;width:1919px;height:931px;background:rgba(0,0,0,0.5);z-index:50"></div>
<div style="position:absolute;left:0;top:0;width:1919px;height:931px;z-index:60">
<div class="box" style="left:572px;top:217px;width:775px;height:493px;background:#fff;border-radius:8px;box-shadow:0 0 0 1px rgba(6,44,82,0.1),0 2px 16px rgba(33,43,54,0.08),0 31px 41px rgba(32,42,53,0.2)"></div><div class="t" style="left:597.30px;top:249px;font-family:'Liberation Sans', sans-serif;font-size:20px;line-height:26px;color:#303235;font-weight:400;letter-spacing:0.035px;">Add a new template</div><svg class="box" style="left:1289px;top:250px" width="21" height="21" viewBox="0 0 21 21"><path d="M1.3 1.3 L19.7 19.7 M19.7 1.3 L1.3 19.7" stroke="#5c5f62" stroke-width="2.1" stroke-linecap="round"/></svg><div class="box" style="left:572px;top:303px;width:775px;height:1px;background:#e1e3e5"></div><div class="t" style="left:596.75px;top:332px;font-family:'Liberation Sans', sans-serif;font-size:18px;line-height:23px;color:#303235;font-weight:400;letter-spacing:0.277px;">Select a template to create</div><div class="box" style="left:597px;top:359px;width:725px;height:45px;border:1px solid #c9cccf;border-bottom-color:#aeb4b9;border-radius:5px;background:#fff"></div><div class="t" style="left:612.10px;top:370px;font-family:'Liberation Sans', sans-serif;font-size:20px;line-height:26px;color:#303235;font-weight:400;letter-spacing:0.350px;">product</div><svg class="box" style="left:1295px;top:375px" width="9" height="13" viewBox="0 0 9 13"><path d="M4.5 0.3 L8.7 5.2 H0.3 Z M0.3 7.8 H8.7 L4.5 12.7 Z" fill="#5c5f62"/></svg><div class="box" style="left:598px;top:431px;width:25px;height:25px;border:2px solid #2c6ecb;border-radius:50%;background:#fff"></div><div class="box" style="left:604.5px;top:437.2px;width:12.5px;height:12.5px;border-radius:50%;background:#2c6ecb"></div><div class="t" style="left:634.50px;top:432px;font-family:'Liberation Sans', sans-serif;font-size:18px;line-height:23px;color:#303235;font-weight:400;letter-spacing:-1.000px;">JSON</div><div class="box" style="left:598px;top:473px;width:25px;height:25px;border:2px solid #c4c9ce;border-radius:50%;background:#fff"></div><div class="t" style="left:634.60px;top:475px;font-family:'Liberation Sans', sans-serif;font-size:18px;line-height:23px;color:#303235;font-weight:400;letter-spacing:0.860px;">liquid</div><div class="t" style="left:597.30px;top:527px;font-family:'Liberation Sans', sans-serif;font-size:18px;line-height:23px;color:#303235;font-weight:400;letter-spacing:0.050px;">File name</div><div class="box" style="left:594px;top:550.5px;width:731px;height:53px;border:2.5px solid #3388ff;border-radius:8px"></div><div class="box" style="left:597px;top:554px;width:725px;height:45px;border:1px solid #b3b8bd;border-radius:5px;background:#fff"></div><div class="t" style="left:611.90px;top:565px;font-family:'Liberation Sans', sans-serif;font-size:20px;line-height:26px;color:#6d7175;font-weight:400;letter-spacing:0.300px;">product.</div><div class="t" style="left:697.30px;top:565px;font-family:'Liberation Sans', sans-serif;font-size:20px;line-height:26px;color:#303235;font-weight:400;letter-spacing:0.164px;">neon-product-customiser</div><div class="box" style="left:922px;top:563px;width:1px;height:27px;background:#202223"></div><div class="t" style="left:1265.40px;top:565px;font-family:'Liberation Sans', sans-serif;font-size:20px;line-height:26px;color:#6d7175;font-weight:400;letter-spacing:-0.075px;">.json</div><div class="box" style="left:572px;top:624px;width:775px;height:1px;background:#e1e3e5"></div><div class="box" style="left:1133px;top:646px;width:98px;height:45px;border:1px solid #d2d5d8;border-bottom-color:#c0c4c8;border-radius:6px;background:#fff;box-shadow:0 1px 0 rgba(0,0,0,0.05)"></div><div class="t" style="left:1153.50px;top:657px;font-family:'Liberation Sans', sans-serif;font-size:19px;line-height:25px;color:#303235;font-weight:700;letter-spacing:-1.000px;">Cancel</div><div class="box" style="left:1241px;top:646px;width:86px;height:45px;border-radius:6px;background:#008060;box-shadow:inset 0 -1px 0 #005e46"></div><div class="t" style="left:1261.30px;top:657px;font-family:'Liberation Sans', sans-serif;font-size:19px;line-height:25px;color:#fff;font-weight:700;letter-spacing:-0.367px;">Done</div>
</div>
</body></html>
